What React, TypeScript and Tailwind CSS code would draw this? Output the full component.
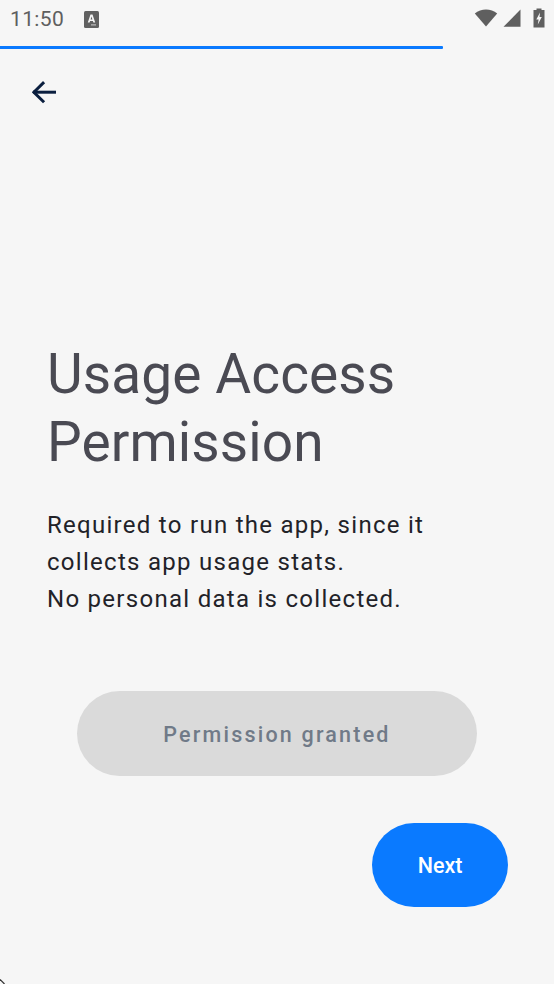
export default function App() {
  return (
    <div className="relative flex h-[984px] w-[554px] flex-col overflow-hidden bg-[#f6f6f6] font-['Roboto',sans-serif]">
      <div className="flex h-[46px] shrink-0 items-start justify-between pl-[10px] pr-[9px] pt-[8px]">
        <div className="flex items-center gap-[20px]">
          <span className="text-[21px] leading-[22px] tracking-[0.35px] text-[#5f5f5f]">11:50</span>
          <svg width="15" height="17" viewBox="0 0 15 17">
            <rect x="0" y="0" width="15" height="17" rx="1.5" fill="#616161" />
            <path d="M3.8 11.5 L6.5 3.5 H8.5 L11.2 11.5 H9.4 L8.9 10 H6.1 L5.6 11.5 Z M6.6 8.4 H8.4 L7.5 5.5 Z" fill="#f6f6f6" fillRule="evenodd" />
            <rect x="7" y="13.4" width="5" height="1" fill="#d0d0d0" />
          </svg>
        </div>
        <div className="flex items-start gap-[4px]">
          <svg width="24" height="18" viewBox="0 0 24 18" className="mt-[1px]">
            <path d="M0.8 4.4 C7 -0.8 17 -0.8 23.2 4.4 L12 17.6 Z" fill="#5f5f5f" />
          </svg>
          <svg width="18" height="18" viewBox="0 0 18 18" className="ml-[1px] mt-[1px]">
            <path d="M17.5 0.5 V17.8 H0.5 Z" fill="#5f5f5f" />
          </svg>
          <svg width="12" height="20" viewBox="0 0 12 20" className="ml-[8px]">
            <path d="M3.5 0.5 H8.5 V2 H11.5 V19.5 H0.5 V2 H3.5 Z" fill="#5f5f5f" />
            <path d="M7 4.5 L3.3 11.5 H5.6 L4.8 16.5 L8.8 9 H6.5 Z" fill="#f6f6f6" />
          </svg>
        </div>
      </div>
      <div className="h-[3px] w-[443px] shrink-0 rounded-r-[1px] bg-[#0a7aff]" />
      <div className="flex h-[86px] shrink-0 items-center pl-[32px]">
        <svg width="24" height="24" viewBox="0 0 24 24" fill="none" stroke="#0b1f3f" strokeWidth="3" strokeLinecap="square" strokeLinejoin="miter">
          <path d="M22.5 12.2 H2.5" />
          <path d="M11 3.2 L1.9 12.2 L11 21.2" />
        </svg>
      </div>
      <div className="flex flex-1 flex-col pl-[47px]">
        <h1 className="mt-[206px] text-[55px] font-normal leading-[67.5px] tracking-[0.1px] text-[#4a4a53]">
          Usage Access
          <br />
          Permission
        </h1>
        <p className="mt-[31px] text-[24px] leading-[37px] tracking-[1.28px] text-[#222228]">
          Required to run the app, since it
          <br />
          collects app usage stats.
          <br />
          No personal data is collected.
        </p>
        <button className="ml-[30px] mt-[73px] flex h-[85px] w-[400px] items-center justify-center rounded-full bg-[#dadada] pt-[4px] text-[21.5px] font-medium tracking-[2.2px] text-[#707a88]">
          Permission granted
        </button>
        <div className="mt-[47px] flex justify-end pr-[46px]">
          <button className="flex h-[84px] w-[136px] items-center justify-center rounded-full bg-[#0a7aff] pt-[3px] text-[21.5px] font-medium text-white">
            Next
          </button>
        </div>
      </div>
      <svg width="5" height="5" viewBox="0 0 5 5" className="absolute bottom-0 left-0">
        <path d="M0 0.5 L4.5 5" stroke="#333" strokeWidth="1.2" fill="none" />
      </svg>
    </div>
  );
}
